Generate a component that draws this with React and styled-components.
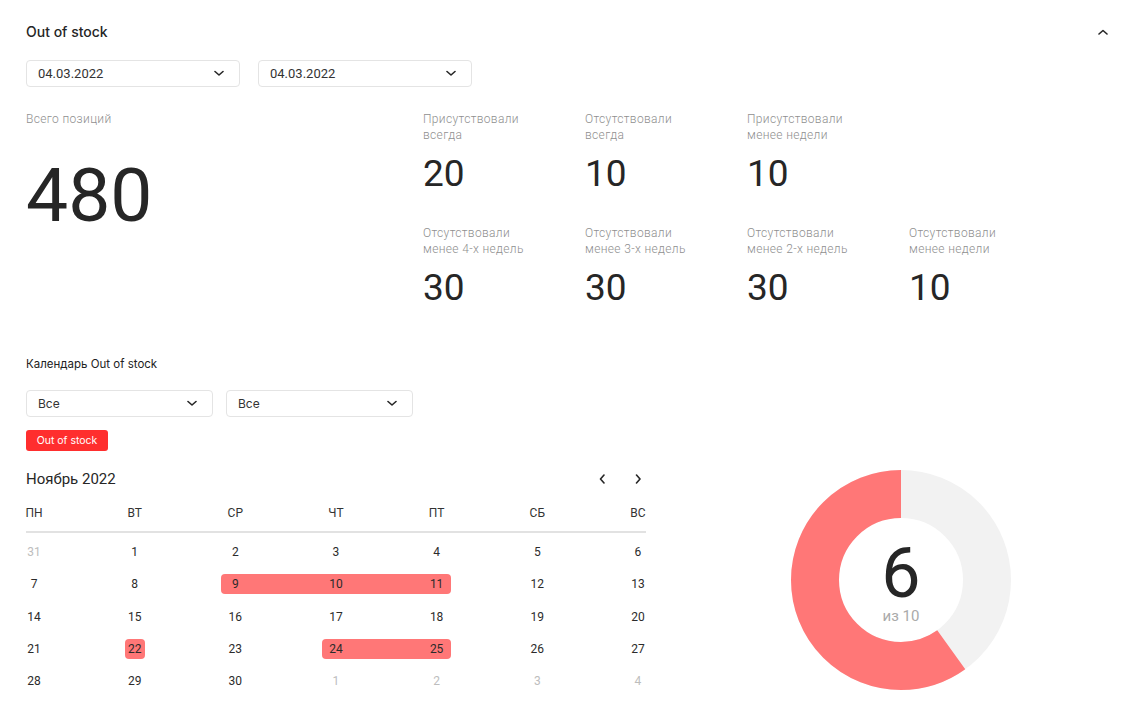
import React from 'react';
import styled, { createGlobalStyle } from 'styled-components';

const GlobalStyle = createGlobalStyle`
  body {
    margin: 0;
    background: #fff;
    font-family: Roboto, "Liberation Sans", sans-serif;
    color: #262626;
  }
`;

const stats = [
  [
    { label: ['Присутствовали', 'всегда'], value: 20 },
    { label: ['Отсутствовали', 'всегда'], value: 10 },
    { label: ['Присутствовали', 'менее недели'], value: 10 },
  ],
  [
    { label: ['Отсутствовали', 'менее 4-х недель'], value: 30 },
    { label: ['Отсутствовали', 'менее 3-х недель'], value: 30 },
    { label: ['Отсутствовали', 'менее 2-х недель'], value: 30 },
    { label: ['Отсутствовали', 'менее недели'], value: 10 },
  ],
];

const weekDays = ['ПН', 'ВТ', 'СР', 'ЧТ', 'ПТ', 'СБ', 'ВС'];

// each week: days, muted flags, highlighted ranges [from, to] by column (1-based)
const weeks = [
  { days: [31, 1, 2, 3, 4, 5, 6], muted: [0], ranges: [] },
  { days: [7, 8, 9, 10, 11, 12, 13], muted: [], ranges: [[3, 5]] },
  { days: [14, 15, 16, 17, 18, 19, 20], muted: [], ranges: [] },
  { days: [21, 22, 23, 24, 25, 26, 27], muted: [], ranges: [[2, 2], [4, 5]] },
  { days: [28, 29, 30, 1, 2, 3, 4], muted: [3, 4, 5, 6], ranges: [] },
];

function Chevron({ dir = 'down', size = 10 }) {
  const points = dir === 'down' ? '1,1.5 5,5 9,1.5'
    : dir === 'up' ? '1,5 5,1.5 9,5'
    : dir === 'left' ? '5,1 1.5,5 5,9'
    : '1.5,1 5,5 1.5,9';
  const vertical = dir === 'down' || dir === 'up';
  return (
    <svg width={vertical ? size : 7} height={vertical ? 7 : size} viewBox={vertical ? '0 0 10 7' : '0 0 7 10'}>
      <polyline points={points} fill="none" stroke="#262626" strokeWidth="1.6" strokeLinecap="round" strokeLinejoin="round" />
    </svg>
  );
}

function Donut({ value, total }) {
  const r = 86;
  const c = 2 * Math.PI * r;
  const part = (value / total) * c;
  return (
    <DonutBox>
      <svg width="220" height="220" viewBox="0 0 220 220">
        <circle cx="110" cy="110" r={r} fill="none" stroke="#f2f2f2" strokeWidth="48" />
        <circle
          cx="110"
          cy="110"
          r={r}
          fill="none"
          stroke="#ff7777"
          strokeWidth="48"
          strokeDasharray={`${part} ${c}`}
          strokeDashoffset={-(c - part)}
          transform="rotate(-90 110 110)"
        />
      </svg>
      <DonutCenter>
        <DonutValue>{value}</DonutValue>
        <DonutCaption>из {total}</DonutCaption>
      </DonutCenter>
    </DonutBox>
  );
}

export default function App() {
  return (
    <Page>
      <GlobalStyle />
      <Header>
        <Title>Out of stock</Title>
        <IconButton><Chevron dir="up" /></IconButton>
      </Header>

      <SelectRow $gap={18}>
        <Select $width={214}><span>04.03.2022</span><Chevron /></Select>
        <Select $width={214}><span>04.03.2022</span><Chevron /></Select>
      </SelectRow>

      <Summary>
        <Total>
          <Label>Всего позиций</Label>
          <BigNumber>480</BigNumber>
        </Total>
        <StatsGrid>
          {stats.map((row, i) => (
            <StatsRow key={i}>
              {row.map((s, j) => (
                <Stat key={j}>
                  <Label>{s.label[0]}<br />{s.label[1]}</Label>
                  <StatValue>{s.value}</StatValue>
                </Stat>
              ))}
            </StatsRow>
          ))}
        </StatsGrid>
      </Summary>

      <SectionTitle>Календарь Out of stock</SectionTitle>

      <SelectRow $gap={13}>
        <Select $width={187} $inter><span>Все</span><Chevron /></Select>
        <Select $width={187} $inter><span>Все</span><Chevron /></Select>
      </SelectRow>

      <Tag>Out of stock</Tag>

      <Bottom>
        <Calendar>
          <CalHeader>
            <Month>Ноябрь 2022</Month>
            <Arrows>
              <IconButton><Chevron dir="left" /></IconButton>
              <IconButton><Chevron dir="right" /></IconButton>
            </Arrows>
          </CalHeader>
          <WeekHead>
            {weekDays.map((d, i) => <WeekDay key={d} $col={i + 1}>{d}</WeekDay>)}
          </WeekHead>
          <Weeks>
            {weeks.map((w, wi) => (
              <Week key={wi}>
                {w.ranges.map(([a, b]) => (
                  <Highlight key={a} $from={a} $to={b} $single={a === b} />
                ))}
                {w.days.map((d, di) => (
                  <Day key={di} $col={di + 1} $muted={w.muted.includes(di)}>{d}</Day>
                ))}
              </Week>
            ))}
          </Weeks>
        </Calendar>
        <ChartArea>
          <Donut value={6} total={10} />
        </ChartArea>
      </Bottom>
    </Page>
  );
}

const Page = styled.div`
  width: 1141px;
  box-sizing: border-box;
  padding: 22px 30px 0 26px;
`;

const Header = styled.div`
  display: flex;
  align-items: center;
  justify-content: space-between;
  height: 20px;
`;

const Title = styled.h1`
  margin: 0;
  font-family: Inter, Roboto, sans-serif;
  font-size: 14px;
  line-height: 20px;
  font-weight: 500;
  color: #262626;
`;

const IconButton = styled.div`
  width: 16px;
  height: 16px;
  display: flex;
  align-items: center;
  justify-content: center;
`;

const SelectRow = styled.div`
  display: flex;
  gap: ${p => p.$gap}px;
  margin-top: 18px;
`;

const Select = styled.div`
  width: ${p => p.$width}px;
  height: 27px;
  box-sizing: border-box;
  border: 1px solid #e4e4e4;
  border-radius: 4px;
  display: flex;
  align-items: center;
  justify-content: space-between;
  padding: 0 15px 0 11px;
  font-family: ${p => (p.$inter ? 'Inter, ' : '')}Roboto, sans-serif;
  font-size: ${p => (p.$inter ? '12px' : '13px')};
  color: #333;
`;

const Summary = styled.div`
  display: flex;
  margin-top: 24px;
`;

const Total = styled.div`
  width: 397px;
`;

const Label = styled.div`
  font-size: 12px;
  line-height: 16px;
  font-weight: 300;
  color: #8f8f8f;
  letter-spacing: 0.35px;
`;

const BigNumber = styled.div`
  margin-top: 31px;
  font-size: 75px;
  line-height: 75px;
  font-weight: 400;
  color: #262626;
`;

const StatsGrid = styled.div`
  display: flex;
  flex-direction: column;
  gap: 32px;
`;

const StatsRow = styled.div`
  display: grid;
  grid-template-columns: repeat(4, 162px);
`;

const Stat = styled.div`
  padding-left: 0;
`;

const StatValue = styled.div`
  margin-top: 11px;
  font-size: 37px;
  line-height: 39px;
  color: #262626;
`;

const SectionTitle = styled.div`
  margin-top: 49px;
  font-family: Inter, Roboto, sans-serif;
  font-size: 11.5px;
  line-height: 16px;
  color: #222;
`;

const Tag = styled.div`
  margin-top: 13px;
  width: 82px;
  height: 21px;
  border-radius: 3px;
  background: #ff2e2e;
  color: #fff;
  font-family: Inter, Roboto, sans-serif;
  font-size: 10.5px;
  display: flex;
  align-items: center;
  justify-content: center;
`;

const Bottom = styled.div`
  display: flex;
  align-items: flex-start;
  margin-top: 18px;
`;

const Calendar = styled.div`
  width: 620px;
`;

const CalHeader = styled.div`
  display: flex;
  align-items: center;
  justify-content: space-between;
  height: 20px;
`;

const Month = styled.div`
  font-size: 15px;
  color: #262626;
`;

const Arrows = styled.div`
  display: flex;
  gap: 20px;
`;

const cols = `
  display: grid;
  grid-template-columns: repeat(7, 16px);
  justify-content: space-between;
  align-items: center;
`;

const WeekHead = styled.div`
  ${cols}
  margin-top: 16px;
  height: 16px;
  padding-bottom: 10px;
  border-bottom: 2px solid #e2e2e2;
`;

const WeekDay = styled.div`
  grid-column: ${p => p.$col};
  display: flex;
  justify-content: center;
  white-space: nowrap;
  font-size: 12px;
  color: #333;
`;

const Weeks = styled.div`
  padding-top: 3px;
`;

const Week = styled.div`
  ${cols}
  height: 32.25px;
`;

const Highlight = styled.div`
  grid-row: 1;
  grid-column: ${p => p.$from} / ${p => p.$to + 1};
  height: 20px;
  margin: ${p => (p.$single ? '0 -2px' : '0 -6px')};
  border-radius: 4px;
  background: #ff7777;
`;

const Day = styled.div`
  grid-row: 1;
  grid-column: ${p => p.$col};
  position: relative;
  display: flex;
  justify-content: center;
  white-space: nowrap;
  font-size: 12px;
  color: ${p => (p.$muted ? '#bdbdbd' : '#2b2b2b')};
`;

const ChartArea = styled.div`
  flex: 1;
  display: flex;
  justify-content: center;
  padding-left: 45px;
  padding-top: 1px;
`;

const DonutBox = styled.div`
  position: relative;
  width: 220px;
  height: 220px;
`;

const DonutCenter = styled.div`
  position: absolute;
  inset: 0;
  display: flex;
  flex-direction: column;
  align-items: center;
  justify-content: center;
  padding-top: 6px;
`;

const DonutValue = styled.div`
  font-size: 70px;
  line-height: 60px;
  color: #262626;
`;

const DonutCaption = styled.div`
  margin-top: 5px;
  font-size: 15px;
  line-height: 16px;
  color: #aaa;
`;
